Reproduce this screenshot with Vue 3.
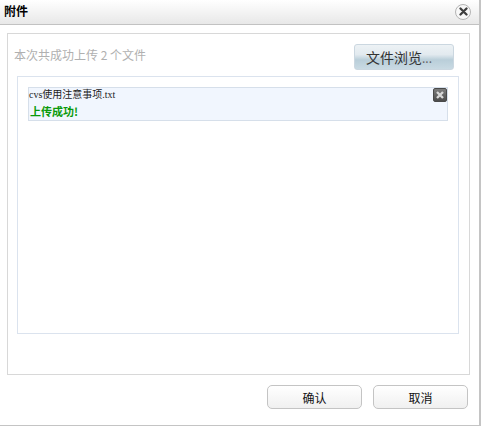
<script setup>
const files = [{ name: 'cvs使用注意事项.txt', status: '上传成功!' }]
</script>

<template>
  <div class="dialog">
    <header class="titlebar">
      <h1 class="title">附件</h1>
      <button class="close" type="button" aria-label="关闭">
        <svg width="9" height="9" viewBox="0 0 9 9">
          <path d="M1.5 1.5 L7.5 7.5 M7.5 1.5 L1.5 7.5" stroke="#3f3f3f" stroke-width="2.3" stroke-linecap="round" />
        </svg>
      </button>
    </header>
    <section class="panel">
      <div class="toolbar">
        <span class="summary">本次共成功上传 2 个文件</span>
        <button class="browse" type="button">文件浏览<span class="dots">...</span></button>
      </div>
      <div class="list">
        <div v-for="f in files" :key="f.name" class="item">
          <div class="name">{{ f.name }}</div>
          <div class="status">{{ f.status }}</div>
          <button class="remove" type="button" aria-label="删除">
            <svg width="8" height="8" viewBox="0 0 8 8">
              <path d="M1 1 L7 7 M7 1 L1 7" stroke="#d8d8d8" stroke-width="2.4" />
            </svg>
          </button>
        </div>
      </div>
    </section>
    <footer class="actions">
      <button class="action" type="button">确认</button>
      <button class="action" type="button">取消</button>
    </footer>
  </div>
</template>

<style scoped>
.dialog {
  box-sizing: border-box;
  width: 481px;
  height: 426px;
  background: #fff;
  border-right: 2px solid #c4c4c4;
  border-bottom: 1px solid #c4c4c4;
  font-family: "Noto Sans CJK SC", "Liberation Sans", sans-serif;
  overflow: hidden;
}
.titlebar {
  box-sizing: border-box;
  height: 25px;
  display: flex;
  align-items: center;
  justify-content: space-between;
  padding: 0 8px 2px 4px;
  background: linear-gradient(#ffffff, #e8e8e8);
  border-bottom: 1px solid #c2c2c2;
}
.title {
  margin: 0;
  font-size: 12px;
  line-height: 14px;
  font-weight: 700;
  color: #000;
}
.close {
  box-sizing: border-box;
  width: 16px;
  height: 16px;
  padding: 0;
  margin-top: 1px;
  display: flex;
  align-items: center;
  justify-content: center;
  border: 1px solid #b4b4b4;
  border-radius: 50%;
  background: #f8f8f8;
}
.panel {
  box-sizing: border-box;
  width: 463px;
  height: 342px;
  margin: 8px 0 0 7px;
  padding: 10px 10px 40px 6px;
  border: 1px solid #d8d8d8;
  display: flex;
  flex-direction: column;
}
.toolbar {
  height: 26px;
  display: flex;
  align-items: flex-start;
  justify-content: space-between;
  padding-right: 5px;
}
.summary {
  font-size: 12px;
  line-height: 21px;
  color: #b0b0b0;
}
.browse {
  box-sizing: border-box;
  width: 100px;
  height: 26px;
  padding: 0 0 0 11px;
  border: 1px solid #cbd7e0;
  border-radius: 3px;
  background: linear-gradient(#edf2f5 0%, #e2eaef 40%, #b9ced9 62%, #c9dae3 100%);
  font: inherit;
  font-size: 14px;
  text-align: left;
  color: #333;
}
.dots {
  color: #666;
  font-size: 12px;
}
.list {
  box-sizing: border-box;
  flex: 1;
  margin: 6px 0 0 3px;
  padding: 10px;
  border: 1px solid #dbe3ee;
}
.item {
  position: relative;
  box-sizing: border-box;
  height: 34px;
  background: #f1f6fe;
  border: 1px solid #d6dfea;
}
.name {
  font-family: "Liberation Serif", "Noto Sans CJK SC", serif;
  font-size: 10px;
  line-height: 13px;
  color: #222;
}
.status {
  margin-top: 3px;
  padding-left: 1px;
  font-size: 11px;
  line-height: 14px;
  font-weight: 700;
  color: #0a9a0a;
}
.remove {
  position: absolute;
  top: 0;
  right: 0;
  box-sizing: border-box;
  width: 14px;
  height: 14px;
  padding: 0;
  display: flex;
  align-items: center;
  justify-content: center;
  border: 1px solid #4a4a4a;
  border-radius: 2px;
  background: linear-gradient(#7d7d7d, #4c4c4c);
}
.actions {
  display: flex;
  justify-content: flex-end;
  gap: 11px;
  padding: 10px 11px 0 0;
}
.action {
  box-sizing: border-box;
  width: 95px;
  height: 24px;
  padding: 0;
  border: 1px solid #c4c4c4;
  border-radius: 5px;
  background: linear-gradient(#ffffff, #f0f0f0);
  font: inherit;
  font-size: 12px;
  color: #111;
}
</style>
